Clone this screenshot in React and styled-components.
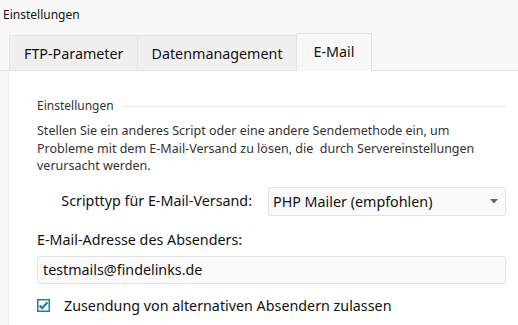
import React from "react";
import styled, { createGlobalStyle } from "styled-components";

const Global = createGlobalStyle`
  html, body { margin: 0; padding: 0; background: #f8f8f8; overflow: hidden; }
  body { font-family: "Noto Sans", "Open Sans", sans-serif; color: #1a1a1a; }
`;

const Window = styled.div`
  width: 540px;
  height: 325px;
  display: flex;
  flex-direction: column;
`;

const Title = styled.div`
  height: 33px;
  padding: 6px 0 0 3px;
  box-sizing: border-box;
  font-size: 12px;
  line-height: 18px;
  color: #111;
`;

const TabBar = styled.div`
  display: flex;
  align-items: flex-end;
  padding-left: 9px;
  height: 37px;
  border-bottom: 1px solid #e4e4e4;
`;

const Tab = styled.div`
  height: 35px;
  box-sizing: border-box;
  padding: 0 13px 0 14px;
  margin-left: -1px;
  border: 1px solid #e4e4e4;
  border-bottom: none;
  background: #f0f0f0;
  display: flex;
  align-items: center;
  font-size: 14.3px;
  color: #111;
  &:first-child { margin-left: 0; }
  ${(p) =>
    p.$active
      ? `height: 38px; margin-bottom: -1px; padding: 0 17px 2px; background: #f8f8f8;`
      : ""}
`;

const Panel = styled.div`
  flex: 1;
  margin-left: 8px;
  background: #fff;
  border-left: 1px solid #ececec;
  padding: 27px 34px 0 28px;
  display: flex;
  flex-direction: column;
`;

const Legend = styled.div`
  display: flex;
  align-items: center;
  gap: 8px;
  font-size: 12px;
  line-height: 16px;
  color: #333;
  &::after {
    content: "";
    flex: 1;
    height: 1px;
    background: #e6e6e6;
  }
`;

const Text = styled.p`
  margin: 8px 0 0;
  font-size: 12.5px;
  line-height: 17.5px;
  color: #333;
`;

const FormRow = styled.div`
  display: grid;
  grid-template-columns: 215px 1fr;
  column-gap: 16px;
  align-items: center;
  margin-top: 12px;
`;

const Label = styled.label`
  font-size: 14.3px;
  line-height: 20px;
  color: #111;
  justify-self: ${(p) => (p.$right ? "end" : "start")};
  margin-top: ${(p) => p.$mt || 0};
  display: block;
`;

const Select = styled.div`
  height: 29px;
  box-sizing: border-box;
  border: 1px solid #e2e2e2;
  border-radius: 3px;
  background: #fafafa;
  display: flex;
  align-items: center;
  justify-content: space-between;
  padding: 0 7px 0 4px;
  font-size: 14.3px;
  color: #111;
`;

const Input = styled.div`
  height: 28px;
  margin-top: 6px;
  box-sizing: border-box;
  border: 1px solid #e2e2e2;
  border-radius: 3px;
  background: #fafafa;
  display: flex;
  align-items: center;
  padding: 0 5px;
  font-size: 14.3px;
  color: #111;
`;

const CheckRow = styled.div`
  display: flex;
  align-items: center;
  gap: 14px;
  margin-top: 12px;
  font-size: 14.3px;
  line-height: 20px;
  color: #111;
`;

const Box = styled.span`
  width: 13px;
  height: 13px;
  display: inline-flex;
`;

export default function App() {
  return (
    <>
      <Global />
      <Window>
        <Title>Einstellungen</Title>
        <TabBar>
          <Tab>FTP-Parameter</Tab>
          <Tab>Datenmanagement</Tab>
          <Tab $active>E-Mail</Tab>
        </TabBar>
        <Panel>
          <Legend>Einstellungen</Legend>
          <Text>
            Stellen Sie ein anderes Script oder eine andere Sendemethode ein, um
            Probleme mit dem E-Mail-Versand zu lösen, die&nbsp; durch Servereinstellungen
            verursacht werden.
          </Text>
          <FormRow>
            <Label $right>Scripttyp für E-Mail-Versand:</Label>
            <Select>
              <span>PHP Mailer (empfohlen)</span>
              <svg width="8" height="5" viewBox="0 0 8 5">
                <path d="M0 0 L8 0 L4 4.5 Z" fill="#666" />
              </svg>
            </Select>
          </FormRow>
          <Label $mt="14px">E-Mail-Adresse des Absenders:</Label>
          <Input>testmails@findelinks.de</Input>
          <CheckRow>
            <Box>
              <svg width="13" height="13" viewBox="0 0 13 13">
                <rect x="0.75" y="0.75" width="11.5" height="11.5" fill="#fff" stroke="#1f7db3" strokeWidth="1.5" />
                <path d="M2.6 6.4 L5.2 9.2 L10.4 3.2" fill="none" stroke="#1f7db3" strokeWidth="2.2" />
              </svg>
            </Box>
            <span>Zusendung von alternativen Absendern zulassen</span>
          </CheckRow>
        </Panel>
      </Window>
    </>
  );
}
